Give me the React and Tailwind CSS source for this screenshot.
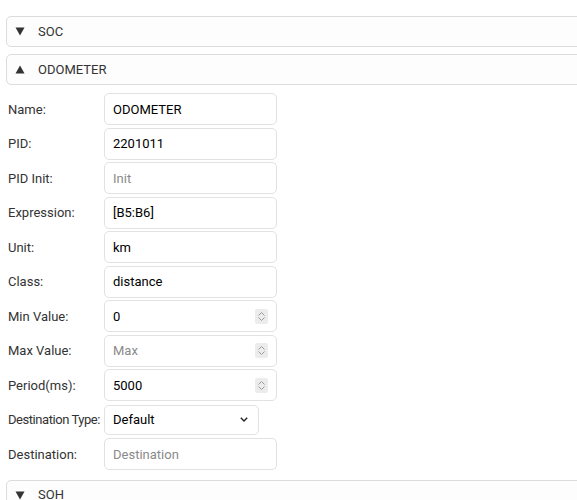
import React from "react";

// collapsible section header bar
function SectionHeader({ title, open }) {
  return (
    <div className="flex items-center h-[31px] w-[600px] border border-[#dcdcdc] rounded-[5px] bg-[#fdfdfd] pl-[8px] text-[13px] text-[#333]">
      <svg width="10" height="9" viewBox="0 0 10 9">
        {open ? (
          <path d="M5 0.5 L9.5 8.5 L0.5 8.5 Z" fill="#333" />
        ) : (
          <path d="M0.5 0.5 L9.5 0.5 L5 8.5 Z" fill="#333" />
        )}
      </svg>
      <span className="ml-[13px]">{title}</span>
    </div>
  );
}

function Spinner() {
  return (
    <span className="flex flex-col items-center justify-center w-[13px] h-[15px] bg-[#ececec] rounded-[2px]">
      <svg width="7" height="4" viewBox="0 0 7 4" className="mb-[1px]">
        <path d="M0.5 3.5 L3.5 0.5 L6.5 3.5" fill="none" stroke="#9a9a9a" strokeWidth="1" />
      </svg>
      <svg width="7" height="4" viewBox="0 0 7 4">
        <path d="M0.5 0.5 L3.5 3.5 L6.5 0.5" fill="none" stroke="#9a9a9a" strokeWidth="1" />
      </svg>
    </span>
  );
}

function Field({ label, value, placeholder, number }) {
  return (
    <div className="flex items-center h-[34.5px]">
      <label className="w-[96px] shrink-0 whitespace-nowrap text-[13px] text-[#333]">{label}</label>
      <div className="flex items-center justify-between w-[173px] h-[32px] border border-[#e2e2e2] rounded-[5px] bg-white pl-[8px] pr-[8px]">
        {value ? (
          <span className="text-[13px] text-black">{value}</span>
        ) : (
          <span className="text-[13px] text-[#8a8a8a]">{placeholder}</span>
        )}
        {number && <Spinner />}
      </div>
    </div>
  );
}

export default function App() {
  const fields = [
    { label: "Name:", value: "ODOMETER" },
    { label: "PID:", value: "2201011" },
    { label: "PID Init:", placeholder: "Init" },
    { label: "Expression:", value: "[B5:B6]" },
    { label: "Unit:", value: "km" },
    { label: "Class:", value: "distance" },
    { label: "Min Value:", value: "0", number: true },
    { label: "Max Value:", placeholder: "Max", number: true },
    { label: "Period(ms):", value: "5000", number: true },
  ];

  return (
    <div
      className="w-[577px] h-[500px] overflow-hidden bg-white pt-[16px] pl-[6px]"
      style={{ fontFamily: 'Roboto, "Noto Sans", sans-serif' }}
    >
      <SectionHeader title="SOC" />
      <div className="mt-[7px]">
        <SectionHeader title="ODOMETER" open />
      </div>

      <div className="pl-[2px] mt-[7px]">
        {fields.map((f) => (
          <Field key={f.label} {...f} />
        ))}

        {/* destination type dropdown */}
        <div className="flex items-center h-[34.5px]">
          <label className="w-[96px] shrink-0 whitespace-nowrap text-[13px] tracking-[-0.45px] text-[#333]">Destination Type:</label>
          <div className="flex items-center justify-between w-[155px] h-[30px] border border-[#e2e2e2] rounded-[5px] bg-white pl-[8px] pr-[10px]">
            <span className="text-[13px] text-black">Default</span>
            <svg width="8" height="5" viewBox="0 0 8 5">
              <path d="M0.8 0.8 L4 4 L7.2 0.8" fill="none" stroke="#222" strokeWidth="1.4" />
            </svg>
          </div>
        </div>

        <Field label="Destination:" placeholder="Destination" />
      </div>

      <div className="mt-[8px]">
        <SectionHeader title="SOH" />
      </div>
    </div>
  );
}
